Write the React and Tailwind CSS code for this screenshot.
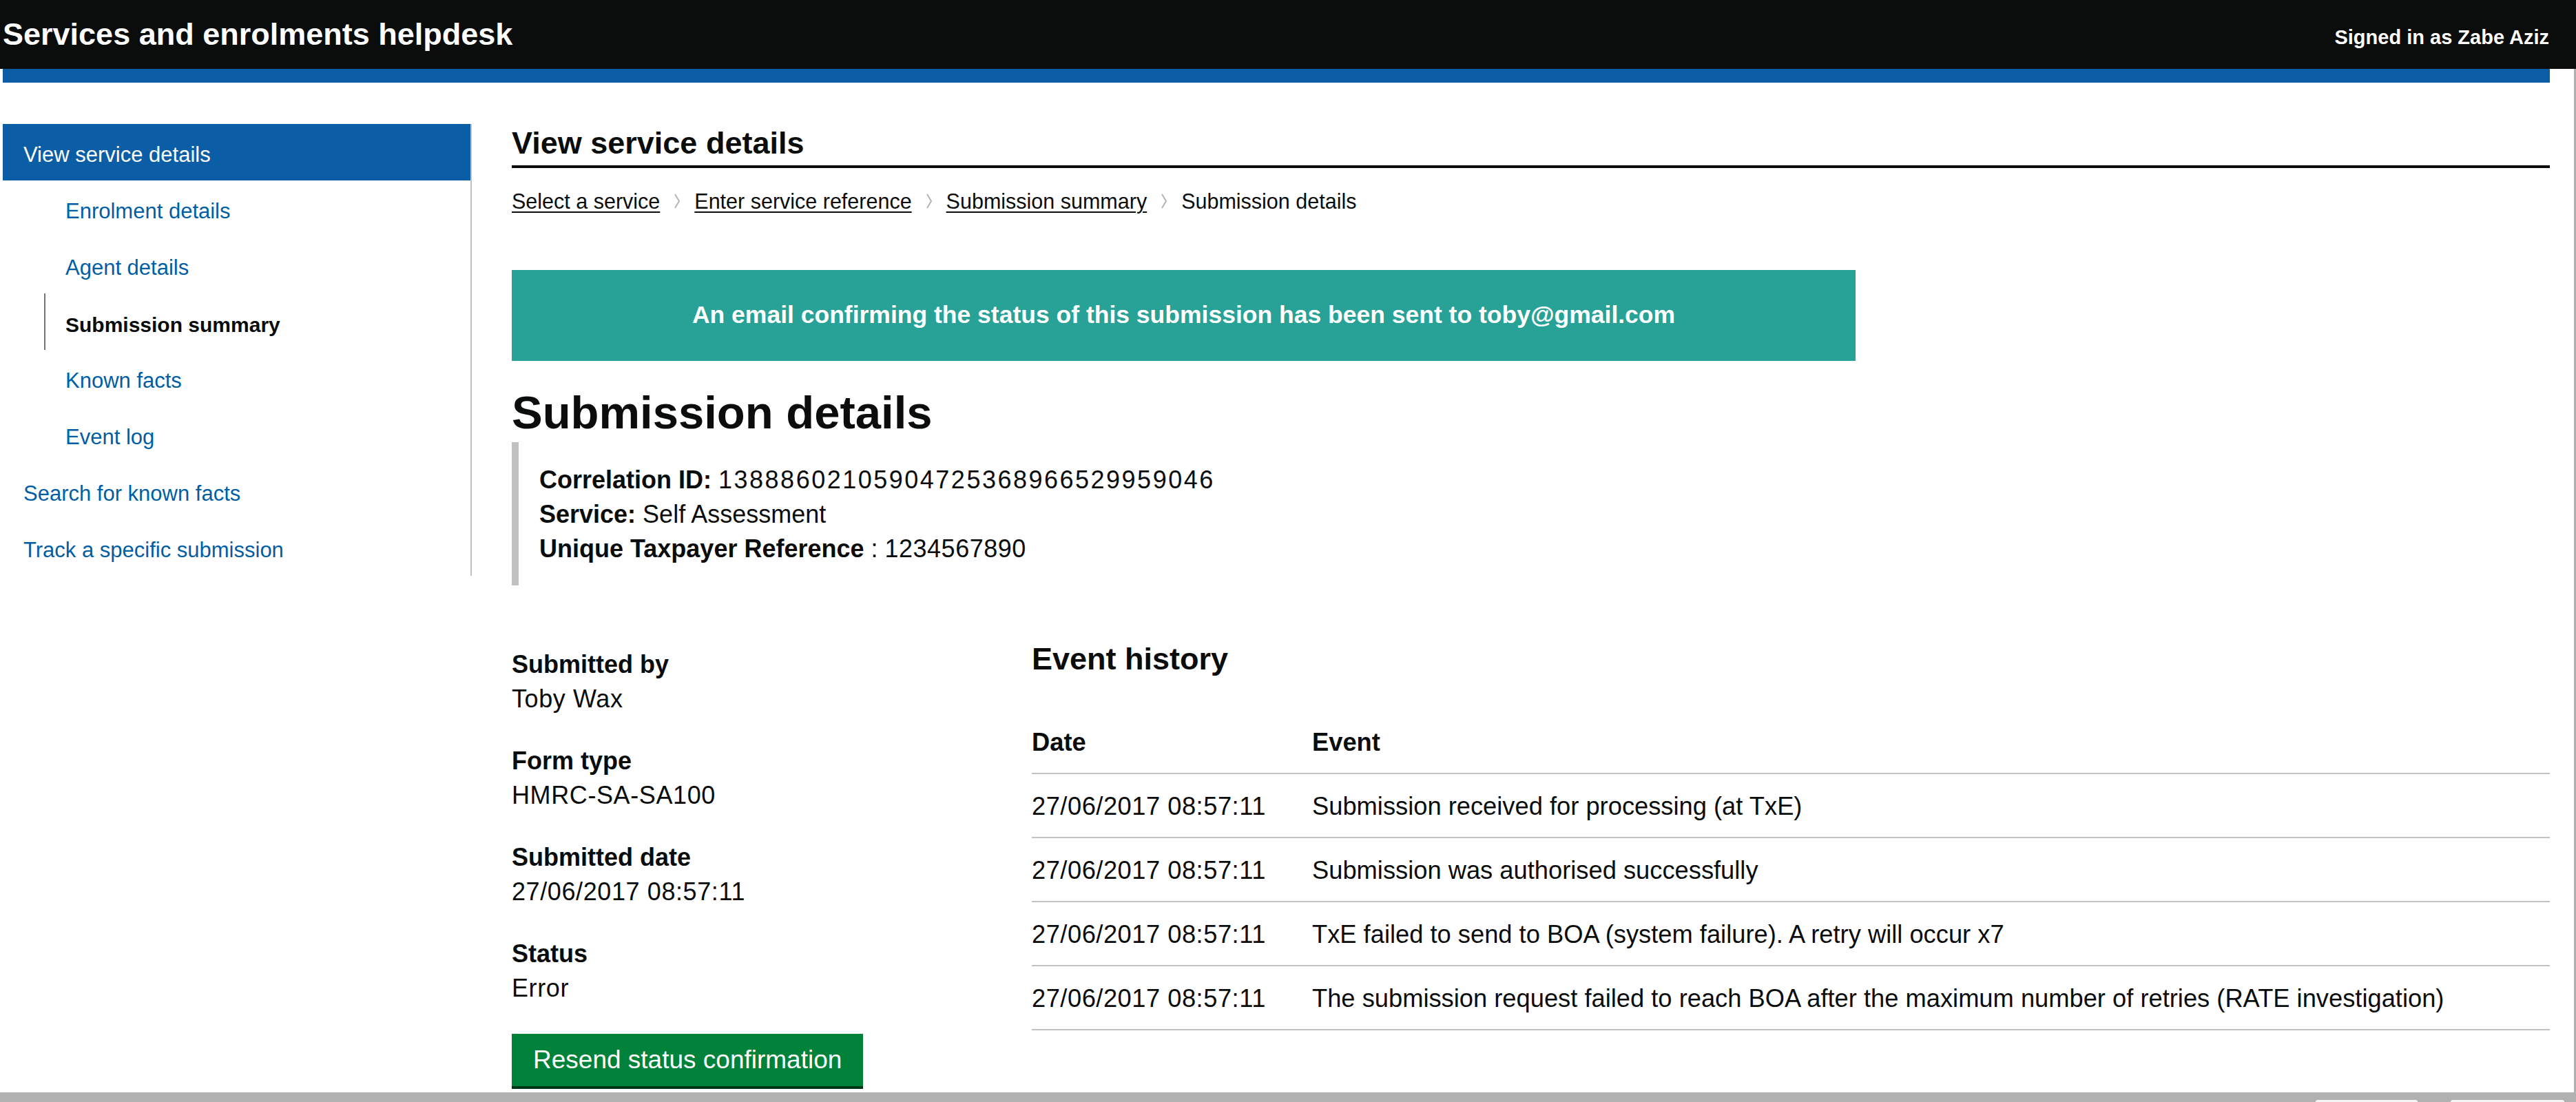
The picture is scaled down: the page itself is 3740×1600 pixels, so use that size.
import React from "react";

const Chevron = () => (
  <svg width="10" height="22" viewBox="0 0 10 22" className="mx-[20px] shrink-0" aria-hidden="true">
    <path d="M2 1 L8 11 L2 21" fill="none" stroke="#b1b4b6" strokeWidth="2" />
  </svg>
);

const sideItems = [
  { label: "Enrolment details", sub: true },
  { label: "Agent details", sub: true },
  { label: "Submission summary", sub: true, active: true },
  { label: "Known facts", sub: true },
  { label: "Event log", sub: true },
  { label: "Search for known facts" },
  { label: "Track a specific submission" },
];

const details = [
  ["Submitted by", "Toby Wax"],
  ["Form type", "HMRC-SA-SA100"],
  ["Submitted date", "27/06/2017 08:57:11"],
  ["Status", "Error"],
];

const events = [
  "Submission received for processing (at TxE)",
  "Submission was authorised successfully",
  "TxE failed to send to BOA (system failure). A retry will occur x7",
  "The submission request failed to reach BOA after the maximum number of retries (RATE investigation)",
];

export default function App() {
  return (
    <div className="h-[1600px] w-full flex flex-col overflow-hidden bg-white text-[#0b0c0c] font-['Liberation_Sans',Arial,sans-serif]">
      <header className="h-[100px] shrink-0 bg-[#0b0c0c] flex items-center justify-between pl-[4px] pr-[39px]">
        <span className="text-[45px] leading-[46px] font-bold text-white">Services and enrolments helpdesk</span>
        <span className="text-[29px] leading-[29px] font-bold text-white mt-[8px]">Signed in as Zabe Aziz</span>
      </header>

      <div className="flex-1 flex flex-col border-r-[3px] border-[#b0b0b0]">
        <div className="h-[20px] shrink-0 bg-[#0b5ea5] ml-[4px] mr-[35px]" />

        <div className="flex pl-[4px] pr-[35px] pt-[58px]">
          <nav className="w-[681px] shrink-0 mt-[2px] self-start border-r-2 border-[#bfc1c3]">
            <div className="h-[82px] bg-[#0b5ea5] flex items-center pt-[9px] pl-[30px] text-[31px] text-white">
              View service details
            </div>
            {sideItems.map((it) =>
              it.active ? (
                <div key={it.label} className="h-[82px] flex items-center pt-[8px] ml-[60px] border-l-2 border-[#6f777b] pl-[29px] text-[30px] font-bold text-[#0b0c0c]">
                  {it.label}
                </div>
              ) : (
                <div
                  key={it.label}
                  className={
                    it.sub
                      ? "h-[82px] flex items-center pt-[9px] pl-[91px] text-[31px] text-[#005ea5]"
                      : "h-[82px] flex items-center pt-[9px] pl-[30px] text-[31px] text-[#005ea5]"
                  }
                >
                  {it.label}
                </div>
              )
            )}
          </nav>

          <main className="flex-1 ml-[58px]">
            <h1 className="text-[45px] leading-[56px] font-bold pt-[2px] pb-[4px] border-b-4 border-[#0b0c0c]">View service details</h1>

            <div className="mt-[28px] flex items-center text-[30.5px] leading-[40px]">
              <span className="underline decoration-2 underline-offset-[4px]">Select a service</span>
              <Chevron />
              <span className="underline decoration-2 underline-offset-[4px]">Enter service reference</span>
              <Chevron />
              <span className="underline decoration-2 underline-offset-[4px]">Submission summary</span>
              <Chevron />
              <span>Submission details</span>
            </div>

            <div className="mt-[80px] w-[1951px] h-[132px] bg-[#28a197] flex items-center justify-center">
              <span className="text-[35.5px] font-bold text-white">
                An email confirming the status of this submission has been sent to toby@gmail.com
              </span>
            </div>

            <h2 className="mt-[35px] text-[67px] leading-[80px] font-bold">Submission details</h2>

            <div className="mt-[3px] border-l-[10px] border-[#bfc1c3] pl-[30px] pt-[30px] pb-[28px] text-[36px] leading-[50px]">
              <div>
                <span className="font-bold">Correlation ID:</span>{" "}
                <span className="tracking-[2.5px]">13888602105904725368966529959046</span>
              </div>
              <div>
                <span className="font-bold">Service:</span> Self Assessment
              </div>
              <div>
                <span className="font-bold">Unique Taxpayer Reference</span> : <span className="tracking-[0.5px]">1234567890</span>
              </div>
            </div>

            <div className="mt-[79px] flex">
              <div className="w-[755px] shrink-0 pt-[11px]">
                {details.map(([k, v]) => (
                  <div key={k} className="mb-[40px] text-[36px] leading-[50px]">
                    <div className="font-bold">{k}</div>
                    <div className="tracking-[0.6px]">{v}</div>
                  </div>
                ))}
                <button className="mt-[1px] h-[80px] px-[31px] bg-[#00823b] border-b-4 border-[#003618] text-white text-[37px] leading-[50px]">
                  Resend status confirmation
                </button>
              </div>

              <div className="flex-1">
                <h2 className="text-[45px] leading-[56px] font-bold">Event history</h2>
                <table className="mt-[46px] w-full border-collapse text-[36.3px] leading-[50px]">
                  <thead>
                    <tr className="border-b-2 border-[#bfc1c3]">
                      <th className="w-[407px] text-left font-bold pt-[22px] pb-[19px] p-0">Date</th>
                      <th className="text-left font-bold pt-[22px] pb-[19px] p-0">Event</th>
                    </tr>
                  </thead>
                  <tbody>
                    {events.map((e, i) => (
                      <tr key={i} className="border-b-2 border-[#bfc1c3]">
                        <td className="pt-[22px] pb-[19px] whitespace-nowrap tracking-[0.5px]">27/06/2017 08:57:11</td>
                        <td className="pt-[22px] pb-[19px] whitespace-nowrap">{e}</td>
                      </tr>
                    ))}
                  </tbody>
                </table>
              </div>
            </div>
          </main>
        </div>
      </div>

      <div className="h-[14px] shrink-0 bg-[#b1b1b1] flex justify-end items-start pt-[11px] pr-[17px] gap-[48px]">
        <div className="w-[148px] h-[3px] bg-[#f5f5f5] rounded-t-[6px]" />
        <div className="w-[165px] h-[3px] bg-[#f5f5f5] rounded-t-[6px]" />
      </div>
    </div>
  );
}
